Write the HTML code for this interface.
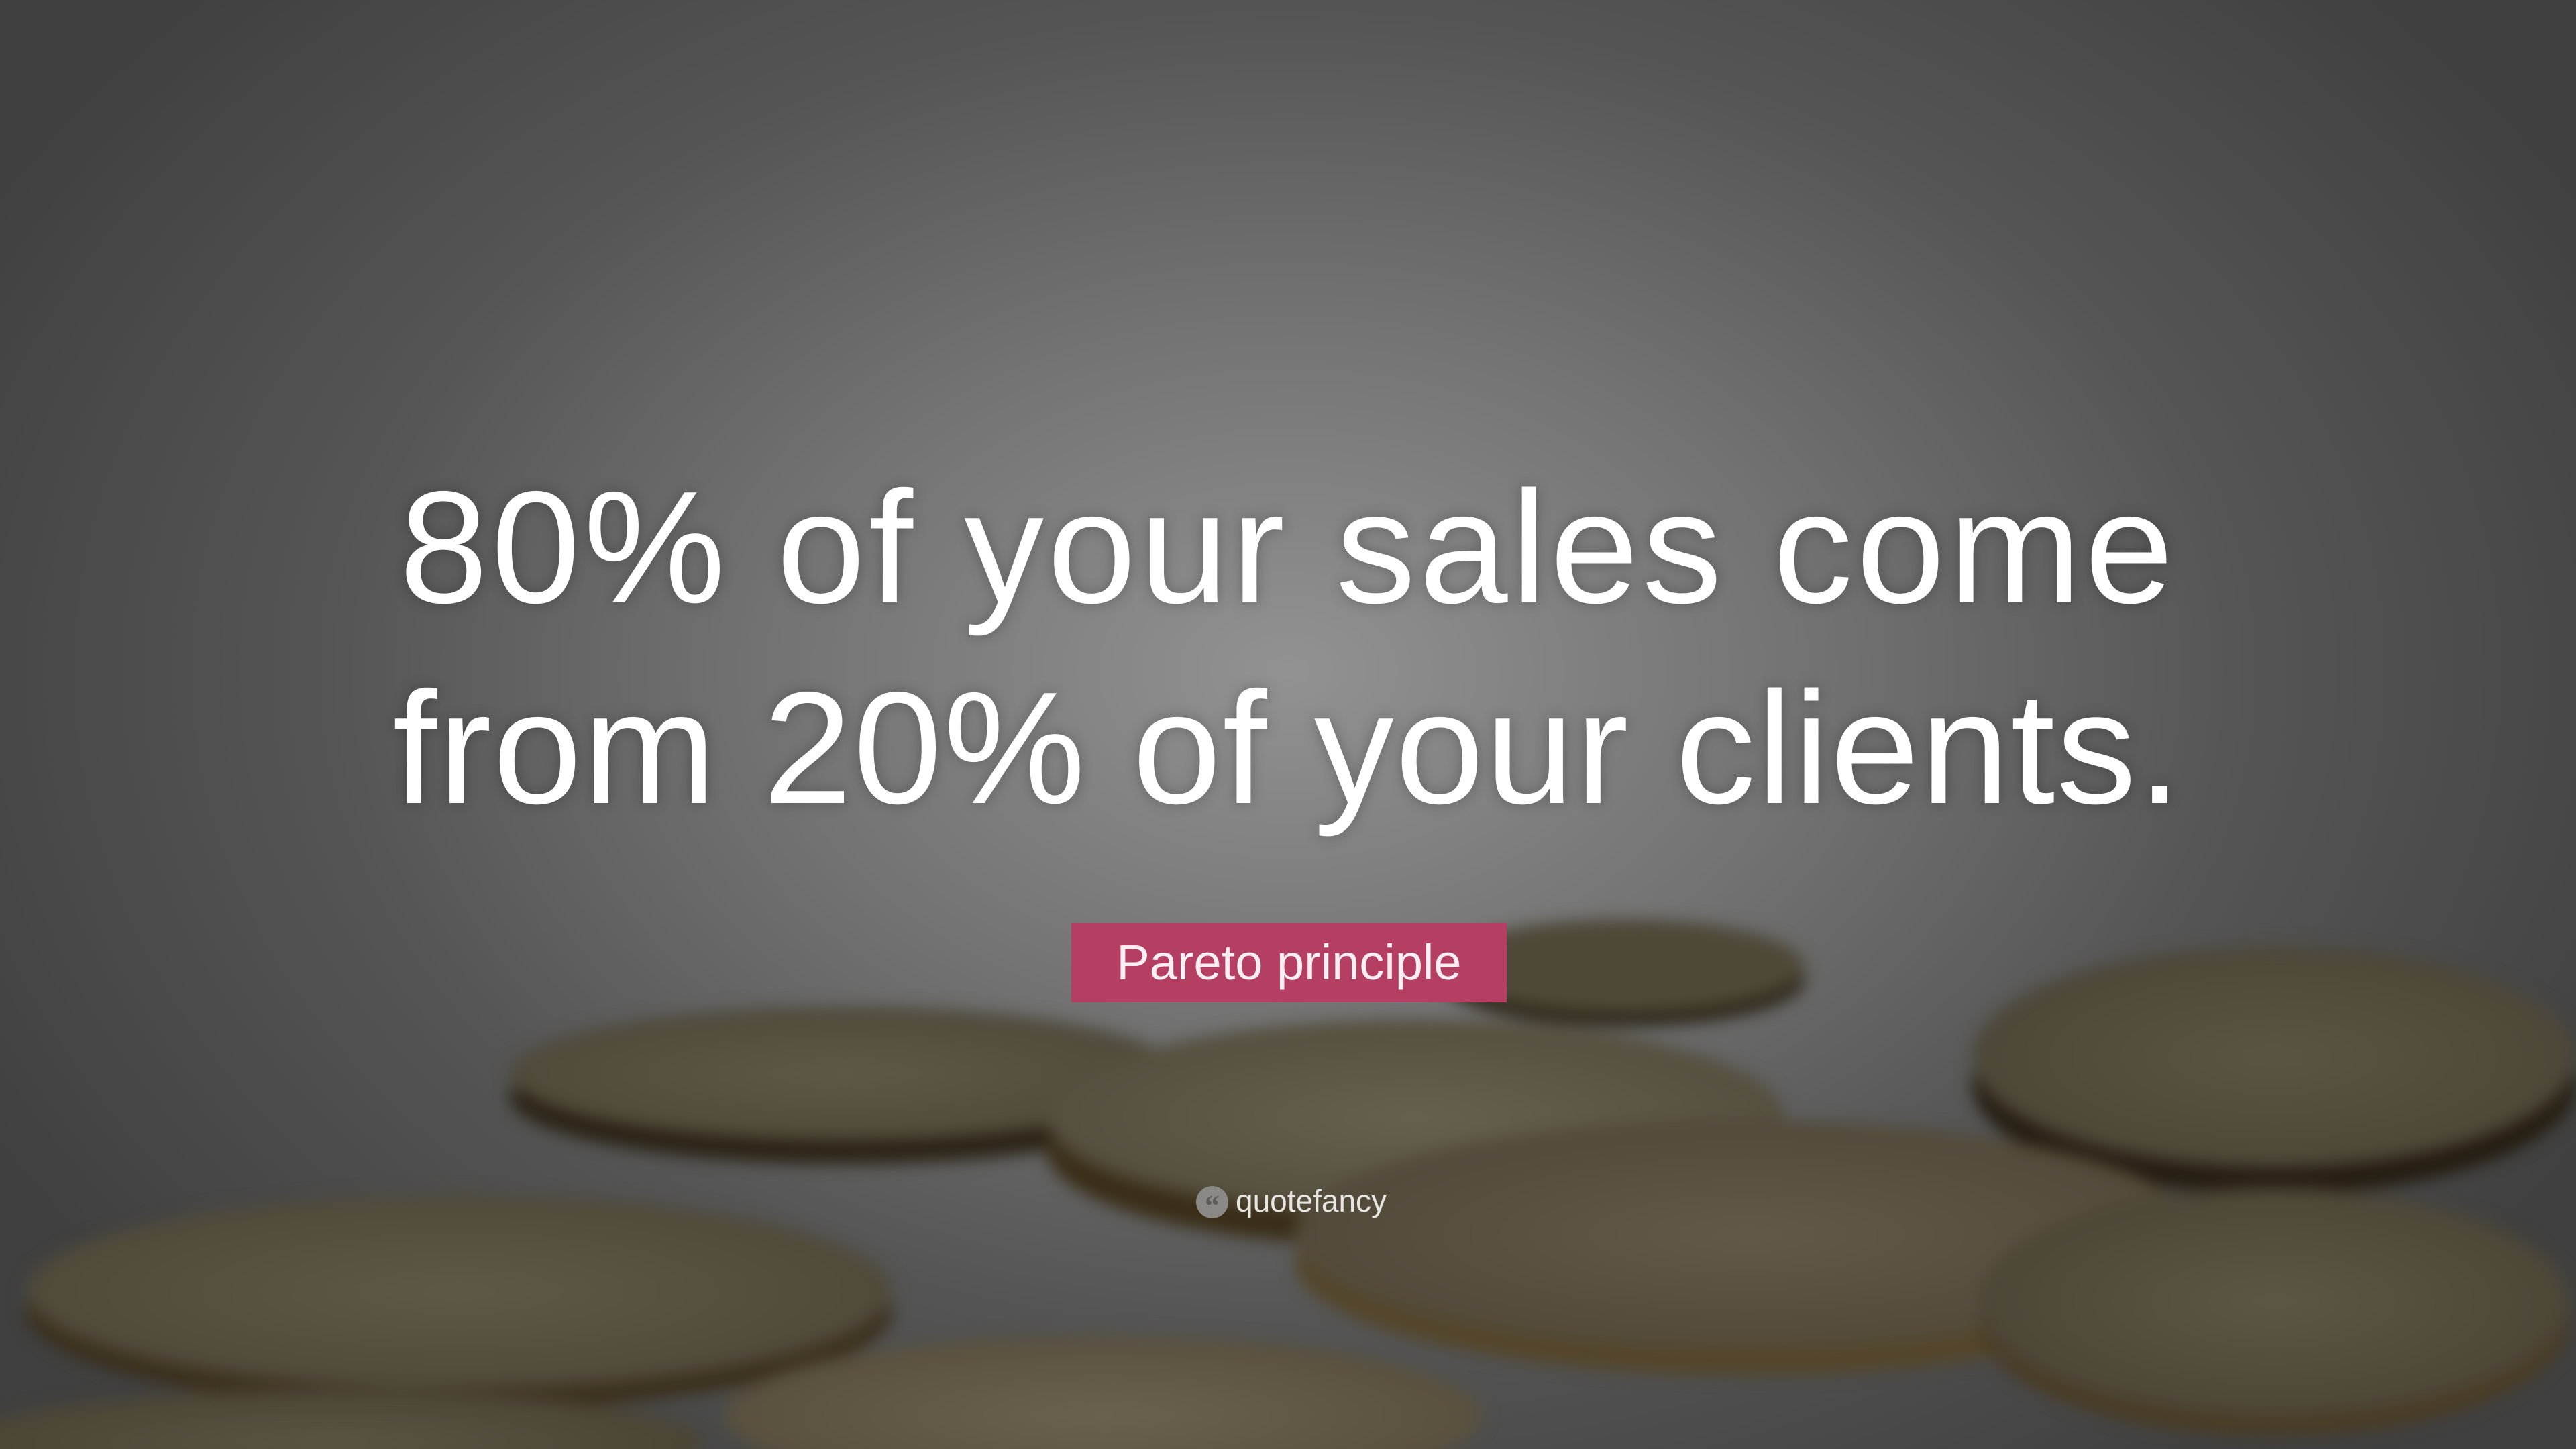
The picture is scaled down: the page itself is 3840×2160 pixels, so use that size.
<!DOCTYPE html>
<html><head><meta charset="utf-8"><style>
html,body{margin:0;padding:0;width:3840px;height:2160px;overflow:hidden}
body{position:relative;
background:radial-gradient(ellipse 2200px 1500px at 1920px 1000px,#929292 0%,#737373 35%,#555555 65%,#404040 100%);
font-family:"Liberation Sans",sans-serif}
.c{position:absolute;border-radius:50%}
.q{position:absolute;left:0;width:3840px;text-align:center;color:#fff;font-size:238px;line-height:300px;text-shadow:0 0 20px rgba(0,0,0,.25)}
</style></head><body>
<div style="position:absolute;left:0;top:0;width:3840px;height:2160px;overflow:hidden">
<div style="position:absolute;left:0;top:0;width:3840px;height:2160px;filter:blur(12px)">
<div class="c" style="left:2150px;top:1370px;width:540px;height:140px;background:#4e4838;box-shadow:0 20px 0 #2a2214"></div>
<div class="c" style="left:2940px;top:1410px;width:900px;height:330px;background:radial-gradient(#5a5444,#484234);box-shadow:0 40px 0 #241c10"></div>
<div class="c" style="left:760px;top:1500px;width:1000px;height:200px;background:radial-gradient(#5e5848,#4a4436);box-shadow:0 35px 0 #2a2214"></div>
<div class="c" style="left:1560px;top:1520px;width:1100px;height:290px;background:radial-gradient(#66604e,#4e4838);box-shadow:0 50px 0 #3a2e18"></div>
<div class="c" style="left:1930px;top:1670px;width:1350px;height:340px;background:radial-gradient(#625a48,#4c4434);box-shadow:0 40px 0 #54462a"></div>
<div class="c" style="left:2950px;top:1770px;width:880px;height:340px;background:radial-gradient(#5c5646,#464032);box-shadow:0 30px 0 #4a3c24"></div>
<div class="c" style="left:40px;top:1780px;width:1290px;height:290px;background:radial-gradient(#5e5848,#4a4434);box-shadow:0 30px 0 #3a2e1a"></div>
<div class="c" style="left:1080px;top:1990px;width:1130px;height:240px;background:radial-gradient(#6a624e,#524a38)"></div>
<div class="c" style="left:-60px;top:2070px;width:1110px;height:160px;background:radial-gradient(#5a5442,#443e30)"></div>
</div></div>
<div class="q" style="top:667px;letter-spacing:5px">80% of your sales come</div>
<div class="q" style="top:966px;letter-spacing:2px">from 20% of your clients.</div>
<div style="position:absolute;left:1597px;top:1376px;width:649px;height:118px;background:#b53e63;color:#fbeef2;font-size:74px;line-height:118px;text-align:center">Pareto principle</div>
<div style="position:absolute;left:1783px;top:1768px;width:48px;height:48px;border-radius:50%;background:#8b8986;color:#5e5c58;font:bold 44px/60px 'Liberation Serif',serif;text-align:center">“</div>
<div style="position:absolute;left:1842px;top:1760px;color:#e8e6e2;font-size:46px;line-height:60px">quotefancy</div>
</body></html>
